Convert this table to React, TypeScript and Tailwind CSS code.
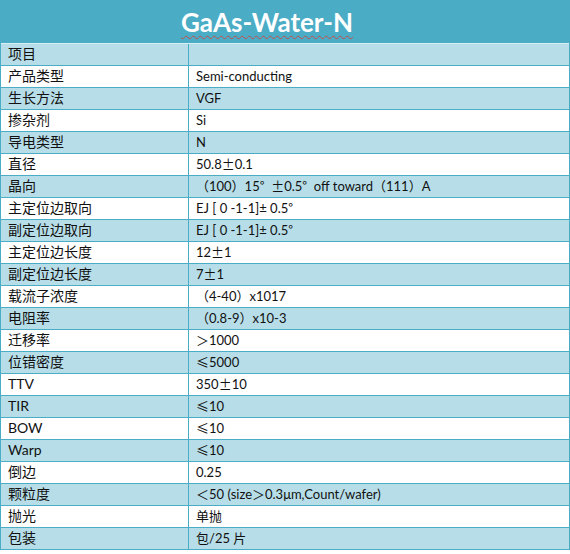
import React from "react";

const rows: [string, string, boolean?][] = [
  ["项目", ""],
  ["产品类型", "Semi-conducting"],
  ["生长方法", "VGF"],
  ["掺杂剂", "Si"],
  ["导电类型", "N"],
  ["直径", "50.8±0.1"],
  ["晶向", "（100）15°  ±0.5°  off toward（111）A"],
  ["主定位边取向", "EJ [ 0 -1-1]± 0.5°", true],
  ["副定位边取向", "EJ [ 0 -1-1]± 0.5°", true],
  ["主定位边长度", "12±1"],
  ["副定位边长度", "7±1"],
  ["载流子浓度", "（4-40）x1017"],
  ["电阻率", "（0.8-9）x10-3"],
  ["迁移率", "＞1000"],
  ["位错密度", "≤5000"],
  ["TTV", "350±10"],
  ["TIR", "≤10"],
  ["BOW", "≤10"],
  ["Warp", "≤10"],
  ["倒边", "0.25"],
  ["颗粒度", "＜50 (size＞0.3μm,Count/wafer)"],
  ["抛光", "单抛"],
  ["包装", "包/25 片"],
];

function Value({ text, latinPm }: { text: string; latinPm?: boolean }) {
  const re = latinPm ? /([≤°])/ : /([±≤°])/;
  const parts = text.split(re).filter((p) => p !== "");
  return (
    <span className="whitespace-pre">
      {parts.map((p, i) =>
        re.test(p) && p.length === 1 ? (
          <span key={i} className="font-['Noto_Sans_CJK_SC',sans-serif]">
            {p}
          </span>
        ) : (
          <span key={i}>{p}</span>
        )
      )}
    </span>
  );
}

export default function App() {
  return (
    <div className="w-[570px] h-[554px] bg-white">
      <div className="w-[570px] border-l border-r border-[#4bacc6]">
        <div className="h-[44px] bg-[#4bacc6] flex items-center justify-center pr-[36px] border-b border-[#d6eef4]">
          <span className="text-white font-bold text-[26px] leading-none underline decoration-wavy decoration-[#c0504d] decoration-1 underline-offset-[3px] font-['Lato','Noto_Sans',sans-serif] mt-[1px]">
            GaAs-Water-N
          </span>
        </div>
        {rows.map(([k, v, latinPm], i) => (
          <div
            key={i}
            className={`grid grid-cols-[188px_1fr] h-[22px] border-b border-[#4bacc6] ${
              i % 2 === 0 ? "bg-[#b7dee8]" : "bg-white"
            }`}
          >
            <div className="flex items-center pl-[7px] pb-[1px] border-r border-[#4bacc6] text-[14px] leading-none text-[#111] font-['Lato','Noto_Sans_CJK_SC',sans-serif] whitespace-nowrap">
              {k}
            </div>
            <div className="flex items-center pl-[7px] pb-[1px] text-[13px] leading-none text-[#111] font-['Lato','Noto_Sans_CJK_SC',sans-serif] whitespace-nowrap">
              <Value text={v} latinPm={latinPm} />
            </div>
          </div>
        ))}
      </div>
    </div>
  );
}
